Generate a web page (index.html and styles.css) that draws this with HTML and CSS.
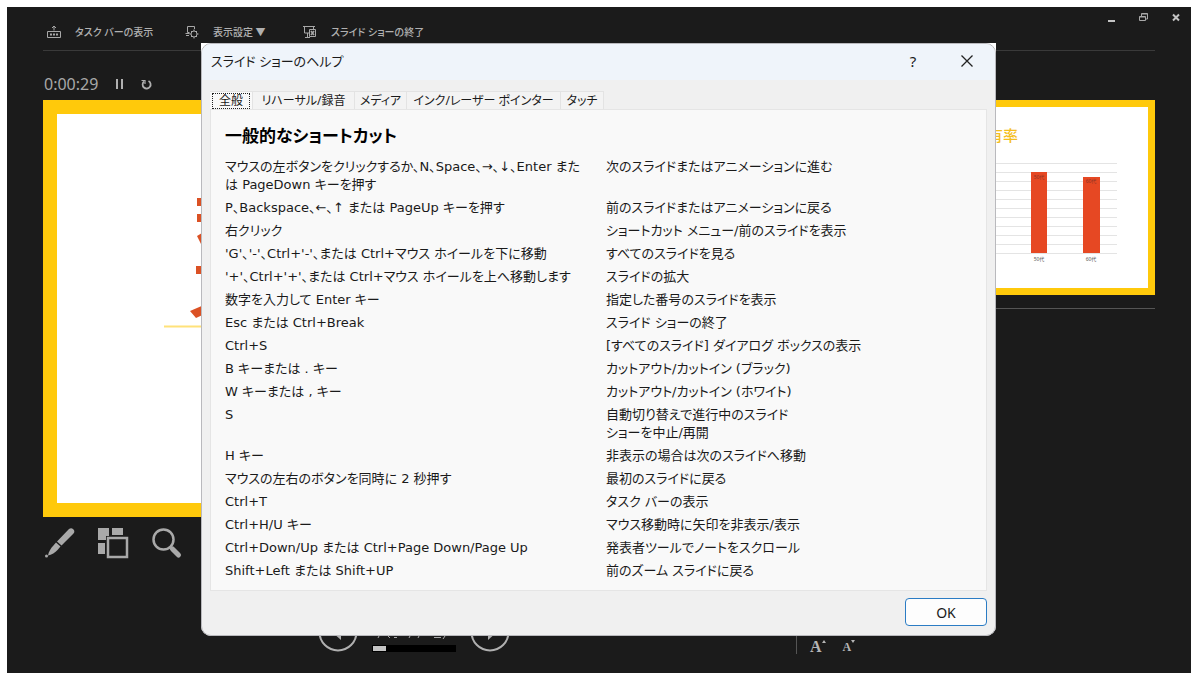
FILE: index.html
```html
<!DOCTYPE html>
<html lang="ja">
<head>
<meta charset="utf-8">
<title>スライド ショーのヘルプ</title>
<link rel="stylesheet" href="styles.css">
</head>
<body>
<main class="presenter">
  <div class="window-bar">
    <button class="icon-button" aria-label="最小化"><svg width="12" height="12" viewBox="0 0 12 12"><path d="M2 9h7" stroke="#c4c4c4" stroke-width="2"/></svg></button>
    <button class="icon-button" aria-label="元に戻す"><svg width="12" height="12" viewBox="0 0 12 12" fill="none" stroke="#a8a8a8"><path d="M3.500 4V1.500h6V7H8M1.500 4.500h6v4h-6zM3.500 2h6M1.500 5h6"/></svg></button>
    <button class="icon-button" aria-label="閉じる"><svg width="12" height="12" viewBox="0 0 12 12"><path d="M3 2.500l6 6M9 2.500l-6 6" stroke="#c4c4c4" stroke-width="2"/></svg></button>
  </div>
  <nav class="toolbar">
    <button class="tool tool-taskbar"><svg width="14" height="14" viewBox="0 0 14 14" fill="none" stroke="#a8a8a8"><path d="M.5 6.500h13v6H.5zM7 5.500V1M5 3l2-2 2 2"/><path d="M3 9.500h2M6 9.500h2M9 9.500h2" stroke-width="2"/></svg><span>タスク バーの表示</span></button>
    <button class="tool tool-display"><svg width="14" height="14" viewBox="0 0 14 14" fill="none" stroke="#a8a8a8"><path d="M4.500 7.500H2.500v-6h7V4M.5 8.500h4M1 10.500h3"/><circle cx="9" cy="9" r="3"/><path d="M9 4.500V6M9 12v1.500M4.500 9H6M12 9h1.500M6 6l1 1M11 11l1 1M12 6l-1 1M7 11l-1 1"/></svg><span>表示設定 ▼</span></button>
    <button class="tool"><svg width="14" height="14" viewBox="0 0 14 14" fill="none" stroke="#a8a8a8"><path d="M0 1.500h12M1.500 2v6H6M4.500 8v4M2 12.500h5M10.500 2v2M6.500 4.500h6v7h-6z"/><path d="M8 6l3 4M11 6l-3 4" stroke-width="1.500"/></svg><span>スライド ショーの終了</span></button>
  </nav>
  <div class="workspace">
    <section class="current">
      <div class="timer">
        <span class="time">0:00:29</span>
        <button class="icon-button" aria-label="一時停止"><svg width="12" height="12" viewBox="0 0 12 12"><path d="M4 1v10M9 1v10" stroke="#b0b0b0" stroke-width="2"/></svg></button>
        <button class="icon-button" aria-label="リセット"><svg width="12" height="12" viewBox="0 0 12 12" fill="none" stroke="#b0b0b0"><path d="M8.500 3a4 4 0 1 1-4.500.5" stroke-width="1.800"/><path d="M1.500 2.500h3.500v3.500" stroke-width="1.200"/></svg></button>
      </div>
      <div class="slide slide-large">
        <svg width="158" height="240" viewBox="0 0 158 240"><g fill="#db5124"><path d="M140 84h18v8h-18zM140 100h18v8h-18zM140 122l5-3 13 26-5 3zM139 152h18v8h-18zM133 197l30-13v9l-24 11z"/></g><path d="M107 212.500h51" stroke="#ffe27a" stroke-width="2"/></svg>
      </div>
      <div class="tools">
        <button class="icon-button" aria-label="ペン"><svg width="32" height="32" viewBox="0 0 32 32" fill="#a9a9a9"><path d="M25 2a3.200 3.200 0 0 1 4.500 4.500L17.500 18.500 13 14.500zM12 15.500l4.500 4-3 3.500c-2 2.500-6 5-9.500 5.500C4.500 25 7 21 9 19z"/><circle cx="2.500" cy="29" r="1.500"/></svg></button>
        <button class="icon-button" aria-label="すべてのスライド"><svg width="32" height="32" viewBox="0 0 32 32"><path d="M-.5 1H11v8H8v4H-.5zM14 1h11v7H14zM-.5 16H7v11H-.5z" fill="#a9a9a9"/><path d="M10 11h19v19H10z" fill="none" stroke="#a9a9a9" stroke-width="2.500"/></svg></button>
        <button class="icon-button" aria-label="拡大"><svg width="32" height="32" viewBox="0 0 32 32" fill="none" stroke="#a9a9a9"><circle cx="11.500" cy="12.500" r="10" stroke-width="2.500"/><path d="M18.500 20.500l2 2" stroke-width="3"/><path d="M20.500 22l6 6" stroke-width="5" stroke-linecap="round"/></svg></button>
      </div>
      <div class="pager">
        <button class="icon-button" aria-label="前へ"><svg width="40" height="40" viewBox="0 0 40 40" fill="none" stroke="#b0b0b0" stroke-width="2"><circle cx="20" cy="20" r="18.500"/><path d="M23 12l-9 8 9 8z" fill="#b0b0b0" stroke="none"/></svg></button>
        <div class="progress-group">
          <svg width="84" height="6" viewBox="0 0 84 6" stroke="#aaa" fill="none"><path d="M6 1l1-2M16 -1l2 2M22 .5h3M37 1l1-2M46 1l1-2M62 .5h7M71 2l2-3"/></svg>
          <div class="progress"><div class="progress-fill"></div></div>
        </div>
        <button class="icon-button" aria-label="次へ"><svg width="40" height="40" viewBox="0 0 40 40" fill="none" stroke="#b0b0b0" stroke-width="2"><circle cx="20" cy="20" r="18.500"/><path d="M18 12l9 8-9 8z" fill="#b0b0b0" stroke="none"/></svg></button>
      </div>
    </section>
    <section class="upcoming">
      <div class="slide slide-next">
        <div class="next-title">有率</div>
        <svg class="chart" width="200" height="110" viewBox="0 0 200 110">
          <path d="M0 5.500h199M0 14.500h199M0 23.500h199M0 32.500h199M0 41.500h199M0 50.500h199M0 59.500h199M0 68.500h199M0 77.500h199M0 86.500h199M0 95.500h199" stroke="#e4e4e4"/>
          <path d="M113 14h16v81h-16zM165 19h17v76h-17z" fill="#e64823"/>
          <g font-size="5" text-anchor="middle" fill="#555"><text x="121" y="21" fill="#8c3425">50代</text><text x="173" y="25" fill="#8c3425">60代</text><text x="121" y="103">50代</text><text x="173" y="103">60代</text></g>
        </svg>
      </div>
      <div class="notes"></div>
      <div class="text-size">
        <button class="icon-button" aria-label="文字を拡大"><span class="letter letter-large">A</span><svg width="4" height="3" viewBox="0 0 4 3" fill="#b5b5b5"><path d="M0 3l2-3 2 3z"/></svg></button>
        <button class="icon-button" aria-label="文字を縮小"><span class="letter letter-small">A</span><svg width="4" height="3" viewBox="0 0 4 3" fill="#b5b5b5"><path d="M0 0h4L2 3z"/></svg></button>
      </div>
    </section>
  </div>

  <div class="dialog-frame">
    <div class="dialog" role="dialog" aria-labelledby="dialog-title">
      <header class="dialog-head">
        <h1 id="dialog-title">スライド ショーのヘルプ</h1>
        <button class="head-button" aria-label="ヘルプ">?</button>
        <button class="head-button" aria-label="閉じる"><svg width="14" height="14" viewBox="0 0 14 14"><path d="M1.500 1.500l11 11M12.500 1.500l-11 11" stroke="#222" stroke-width="1.300"/></svg></button>
      </header>
      <div class="dialog-body">
        <div class="tabs" role="tablist">
          <button class="tab tab-active" role="tab" aria-selected="true"><span>全般</span></button>
          <button class="tab tab-rehearse" role="tab">リハーサル/録音</button>
          <button class="tab tab-media" role="tab">メディア</button>
          <button class="tab tab-ink" role="tab">インク/レーザー ポインター</button>
          <button class="tab tab-touch" role="tab">タッチ</button>
        </div>
        <section class="panel">
          <h2>一般的なショートカット</h2>
          <table>
            <tr><td>マウスの左ボタンをクリックするか、N、Space、→、↓、Enter また<br>は PageDown キーを押す</td><td>次のスライドまたはアニメーションに進む</td></tr>
            <tr><td>P、Backspace、←、↑ または PageUp キーを押す</td><td>前のスライドまたはアニメーションに戻る</td></tr>
            <tr><td>右クリック</td><td>ショートカット メニュー/前のスライドを表示</td></tr>
            <tr><td>'G'、'-'、Ctrl+'-'、または Ctrl+マウス ホイールを下に移動</td><td>すべてのスライドを見る</td></tr>
            <tr><td>'+'、Ctrl+'+'、または Ctrl+マウス ホイールを上へ移動します</td><td>スライドの拡大</td></tr>
            <tr><td>数字を入力して Enter キー</td><td>指定した番号のスライドを表示</td></tr>
            <tr><td>Esc または Ctrl+Break</td><td>スライド ショーの終了</td></tr>
            <tr><td>Ctrl+S</td><td>[すべてのスライド] ダイアログ ボックスの表示</td></tr>
            <tr><td>B キーまたは . キー</td><td>カットアウト/カットイン (ブラック)</td></tr>
            <tr><td>W キーまたは , キー</td><td>カットアウト/カットイン (ホワイト)</td></tr>
            <tr><td>S</td><td>自動切り替えで進行中のスライド<br>ショーを中止/再開</td></tr>
            <tr><td>H キー</td><td>非表示の場合は次のスライドへ移動</td></tr>
            <tr><td>マウスの左右のボタンを同時に 2 秒押す</td><td>最初のスライドに戻る</td></tr>
            <tr><td>Ctrl+T</td><td>タスク バーの表示</td></tr>
            <tr><td>Ctrl+H/U キー</td><td>マウス移動時に矢印を非表示/表示</td></tr>
            <tr><td>Ctrl+Down/Up または Ctrl+Page Down/Page Up</td><td>発表者ツールでノートをスクロール</td></tr>
            <tr><td>Shift+Left または Shift+UP</td><td>前のズーム スライドに戻る</td></tr>
          </table>
        </section>
        <footer class="dialog-foot"><button class="ok">OK</button></footer>
      </div>
    </div>
  </div>
</main>
</body>
</html>
```
FILE: styles.css
```css
* { box-sizing: border-box; }

body {
  margin: 0;
  padding: 7px 7px 6px;
  background: #fff;
  font-family: "Noto Sans", "Noto Sans CJK JP", sans-serif;
  font-feature-settings: "palt";
  color: #1a1a1a;
}

button {
  font: inherit;
  font-feature-settings: inherit;
  color: inherit;
  background: none;
  border: 0;
  padding: 0;
  white-space: nowrap;
}

svg { display: block; }
h1, h2 { margin: 0; font-weight: 400; }

.presenter {
  position: relative;
  display: flex;
  flex-direction: column;
  min-height: calc(100vh - 13px);
  background: #1b1b1b;
  overflow: hidden;
}

.window-bar {
  display: flex;
  justify-content: flex-end;
  gap: 20px;
  height: 18px;
  padding: 4px 9px 0 0;
}

.toolbar {
  display: flex;
  height: 26px;
  margin: 0 36px;
  padding-left: 4px;
  border-bottom: 1px solid #3a3a3a;
  align-items: flex-start;
  color: #b0b0b0;
  font-size: 10px;
  font-weight: 500;
  line-height: 15px;
}

.tool { display: flex; gap: 14px; }
.tool-taskbar { width: 138px; }
.tool-display { width: 118px; }

.workspace {
  flex: 1;
  display: grid;
  grid-template-columns: 741fr 371fr;
  padding: 0 36px;
}

.current, .upcoming {
  display: flex;
  flex-direction: column;
  min-width: 0;
}

.timer {
  display: flex;
  align-items: center;
  gap: 15px;
  height: 49px;
  padding: 16px 0 0 1px;
  color: #a8a8a8;
  font-size: 16px;
}

.slide { background: #fff; border: solid #ffc90b; }

.slide-large {
  aspect-ratio: 741 / 417;
  border-width: 14px;
}

.tools { display: flex; gap: 22px; padding: 10px 0 0 1px; }

.pager {
  display: flex;
  justify-content: center;
  align-items: flex-end;
  gap: 14px;
  margin-top: auto;
  padding-bottom: 21px;
}

.progress-group { display: flex; flex-direction: column; gap: 2px; }
.progress-group svg { overflow: visible; }
.progress { width: 84px; height: 7px; padding: 1px; background: #000; }
.progress-fill { width: 16%; height: 5px; background: #c4c4c4; }

.upcoming { padding: 49px 0 0 24px; }

.slide-next {
  display: flex;
  flex-direction: column;
  align-items: flex-end;
  aspect-ratio: 347 / 195;
  border-width: 7px;
  padding: 17px 30px 0 0;
}

.next-title {
  margin-right: 100px;
  color: #f5be1e;
  font-size: 15px;
  font-weight: 500;
  line-height: 22px;
}

.chart { margin-top: 12px; }
.notes { flex: 1; margin-top: 13px; border-top: 1px solid #555; }

.text-size {
  display: flex;
  gap: 17px;
  margin: 0 0 19px -12px;
  padding-left: 13px;
  border-left: 1px solid #555;
}

.text-size .icon-button { display: flex; align-items: flex-start; height: 20px; }
.text-size .icon-button svg { margin-top: 6px; }

.letter {
  align-self: flex-end;
  color: #b5b5b5;
  font-family: "Liberation Serif", serif;
  font-weight: 700;
  line-height: 14px;
}

.letter-large { font-size: 16px; }
.letter-small { font-size: 12px; }

.dialog-frame {
  position: absolute;
  top: 36px;
  left: 194px;
  right: 195px;
  background: #fff;
  border-radius: 0 0 10px 10px;
}

.dialog {
  border: 1px solid #b9b9bd;
  border-radius: 10px;
  background: #f0f0f0;
  overflow: hidden;
}

.dialog-head {
  display: flex;
  align-items: center;
  height: 36px;
  padding: 0 6px 2px 9px;
  background: #eff4fa;
}

.dialog-head h1 { flex: 1; font-size: 13px; line-height: 20px; }

.head-button {
  display: flex;
  justify-content: center;
  align-items: center;
  width: 44px;
  height: 34px;
  font-size: 15px;
}

.head-button + .head-button { margin-left: 10px; }

.dialog-body { padding: 11px 8px 9px; }

.tabs { display: flex; height: 18px; font-size: 12px; line-height: 18px; }

.tab {
  border: solid #e3e3e3;
  border-width: 1px 1px 0 0;
  background: #f3f3f3;
}

.tab-active { width: 43px; padding: 0 2px; background: #f9f9f9; }
.tab-active span { display: block; border: 1px dotted #222; line-height: 14px; }
.tab-rehearse { width: 102px; }
.tab-media { width: 52px; }
.tab-ink { width: 154px; }
.tab-touch { width: 43px; }

.panel {
  padding: 12px 14px 7px;
  border: 1px solid #e5e5e5;
  background: #f9f9f9;
}

.panel h2 {
  margin-bottom: 6px;
  color: #000;
  font-size: 17px;
  font-weight: 700;
  line-height: 28px;
}

table { width: 100%; border-collapse: collapse; table-layout: fixed; }

td {
  padding: 2px 0 3px;
  font-family: "DejaVu Sans", "Noto Sans CJK JP", sans-serif;
  font-size: 13px;
  line-height: 18px;
  vertical-align: top;
  white-space: nowrap;
}

td:first-child { width: 51%; }

.dialog-foot { display: flex; justify-content: flex-end; padding-top: 7px; }

.ok {
  width: 82px;
  height: 28px;
  border: 1px solid #2b7cc4;
  border-radius: 4px;
  background: #fdfdfd;
  font-size: 14px;
}
```
